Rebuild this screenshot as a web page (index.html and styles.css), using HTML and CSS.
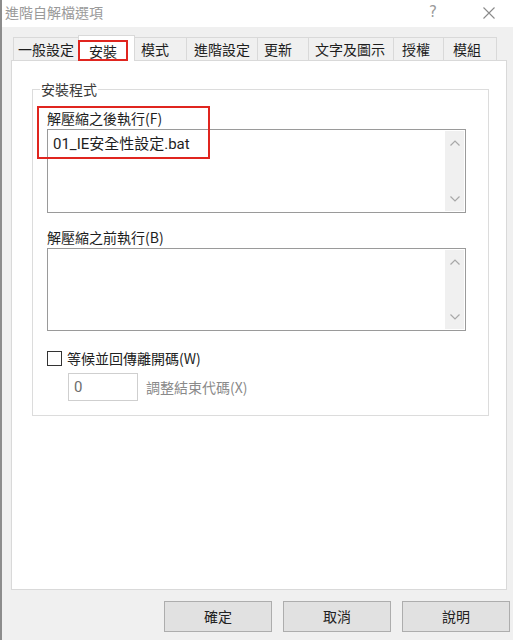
FILE: index.html
```html
<!DOCTYPE html>
<html lang="zh-Hant">
<head>
<meta charset="utf-8">
<title>進階自解檔選項</title>
<link rel="stylesheet" href="styles.css">
</head>
<body>
<div class="window">
  <div class="titlebar">
    <span class="title">進階自解檔選項</span>
    <span class="help">?</span>
    <svg class="close" width="12" height="12" viewBox="0 0 12 12"><path d="M0.5 0.5 L11.5 11.5 M11.5 0.5 L0.5 11.5" stroke="#8a8a8a" stroke-width="1.1" fill="none"/></svg>
  </div>
  <div class="tabs">
    <div class="tab t1">一般設定</div>
    <div class="tab selected"><span class="mark">安裝</span></div>
    <div class="tab t3">模式</div>
    <div class="tab t4">進階設定</div>
    <div class="tab t5">更新</div>
    <div class="tab t6">文字及圖示</div>
    <div class="tab t7">授權</div>
    <div class="tab t8">模組</div>
  </div>
  <div class="panel">
    <div class="group">
      <span class="legend">安裝程式</span>
      <div class="annot"></div>
      <div class="label">解壓縮之後執行(F)</div>
      <div class="textbox">
        <div class="tb-content">01_IE安全性設定.bat</div>
        <div class="scroll">
          <svg width="10" height="6" viewBox="0 0 10 6"><polyline points="0.5,5.5 5,1 9.5,5.5" fill="none" stroke="#a8a8a8" stroke-width="1.2"/></svg>
          <svg width="10" height="6" viewBox="0 0 10 6"><polyline points="0.5,0.5 5,5 9.5,0.5" fill="none" stroke="#a8a8a8" stroke-width="1.2"/></svg>
        </div>
      </div>
      <div class="label label2">解壓縮之前執行(B)</div>
      <div class="textbox tb2">
        <div class="tb-content"></div>
        <div class="scroll">
          <svg width="10" height="6" viewBox="0 0 10 6"><polyline points="0.5,5.5 5,1 9.5,5.5" fill="none" stroke="#a8a8a8" stroke-width="1.2"/></svg>
          <svg width="10" height="6" viewBox="0 0 10 6"><polyline points="0.5,0.5 5,5 9.5,0.5" fill="none" stroke="#a8a8a8" stroke-width="1.2"/></svg>
        </div>
      </div>
      <div class="check-row">
        <span class="checkbox"></span>
        <span class="check-label">等候並回傳離開碼(W)</span>
      </div>
      <div class="code-row">
        <div class="code-input">0</div>
        <span class="code-label">調整結束代碼(X)</span>
      </div>
    </div>
  </div>
  <div class="buttons">
    <div class="btn">確定</div>
    <div class="btn">取消</div>
    <div class="btn">說明</div>
  </div>
</div>
</body>
</html>
```
FILE: styles.css
```css
* { box-sizing: border-box; }
html, body { margin: 0; padding: 0; }
body {
  font-family: "Noto Sans CJK TC", "Noto Sans", sans-serif;
  font-size: 14px;
  color: #1e1e1e;
  background: #f0f0f0;
}
.window {
  width: 513px;
  height: 640px;
  border-left: 2px solid #8c8c8c;
  background: #f0f0f0;
  display: flex;
  flex-direction: column;
  overflow: hidden;
}
.titlebar {
  height: 27px;
  background: #ffffff;
  display: flex;
  align-items: flex-start;
  padding: 2px 18px 0 3px;
  line-height: 20px;
  flex-shrink: 0;
}
.title { color: #9a9a9a; font-size: 14px; }
.help { margin-left: auto; color: #9a9a9a; font-family: "DejaVu Sans", sans-serif; font-size: 15px; width: 8px; }
.close { margin-left: 46px; margin-top: 5px; }
.tabs {
  display: flex;
  align-items: flex-start;
  height: 26px;
  margin-top: 8px;
  padding-left: 11px;
  position: relative;
  z-index: 2;
  flex-shrink: 0;
}
.tab {
  height: 23px;
  margin-top: 2px;
  border: 1px solid #d9d9d9;
  border-bottom: none;
  border-right: none;
  background: #f0f0f0;
  line-height: 23px;
  padding-left: 6px;
  font-size: 14px;
  color: #1e1e1e;
  white-space: nowrap;
}
.t1 { width: 65px; padding-left: 4px; }
.t3 { width: 51px; border-left: none; }
.t4 { width: 71px; padding-left: 7px; }
.t5 { width: 51px; }
.t6 { width: 85px; padding-left: 6px; }
.t7 { width: 50px; padding-left: 8px; }
.t8 { width: 54px; padding-left: 9px; border-right: 1px solid #d9d9d9; }
.tab.selected {
  width: 57px;
  height: 26px;
  margin-top: 0;
  background: #ffffff;
  border-right: 1px solid #d9d9d9;
  padding: 4px 0 0 0;
  line-height: 18px;
}
.mark {
  display: block;
  width: 50px;
  height: 21px;
  margin-left: -1px;
  border: 2px solid #e0251f;
  text-align: center;
}
.panel {
  margin: -1px 6px 0 9px;
  height: 530px;
  border: 1px solid #d9d9d9;
  background: #ffffff;
  position: relative;
  z-index: 1;
  flex-shrink: 0;
}
.group {
  position: relative;
  margin: 28px 17px 0 20px;
  height: 327px;
  border: 1px solid #dcdcdc;
  padding: 19px 0 0 14px;
}
.legend {
  position: absolute;
  left: 7px;
  top: -10px;
  background: #ffffff;
  padding: 0 1px;
  line-height: 18px;
  color: #3a3a3a;
}
.annot {
  position: absolute;
  left: 4px;
  top: 16px;
  width: 173px;
  height: 53px;
  border: 2px solid #e0251f;
}
.label { line-height: 18px; height: 18px; }
.label2 { margin-top: 15px; }
.textbox {
  margin-top: 2px;
  width: 419px;
  height: 84px;
  border: 1px solid #9a9a9a;
  padding: 1px;
  display: flex;
}
.tb2 { height: 83px; }
.tb-content {
  flex: 1;
  padding: 3px 4px;
  font-family: Roboto, "Noto Sans CJK TC", sans-serif;
  font-size: 15px;
  line-height: 20px;
  color: #1e1e1e;
}
.scroll {
  width: 19px;
  background: #f0f0f0;
  display: flex;
  flex-direction: column;
  align-items: center;
  justify-content: space-between;
  padding: 9px 0 9px;
}
.check-row {
  margin-top: 18px;
  display: flex;
  align-items: center;
  height: 18px;
}
.checkbox {
  width: 15px;
  height: 15px;
  border: 1px solid #333333;
  background: #ffffff;
}
.check-label { margin-left: 5px; line-height: 18px; color: #222222; }
.code-row {
  margin-top: 6px;
  display: flex;
  align-items: center;
  padding-left: 21px;
}
.code-input {
  width: 70px;
  height: 28px;
  border: 1px solid #cfcfcf;
  padding-left: 5px;
  line-height: 26px;
  font-family: Roboto, sans-serif;
  font-size: 15px;
  color: #6d6d6d;
}
.code-label { margin-left: 8px; color: #8a8a8a; }
.buttons {
  margin-top: 11px;
  display: flex;
  justify-content: flex-end;
  gap: 11px;
  padding-right: 3px;
}
.btn {
  width: 108px;
  height: 31px;
  background: #e1e1e1;
  border: 1px solid #adadad;
  text-align: center;
  line-height: 29px;
  color: #222222;
}
```
